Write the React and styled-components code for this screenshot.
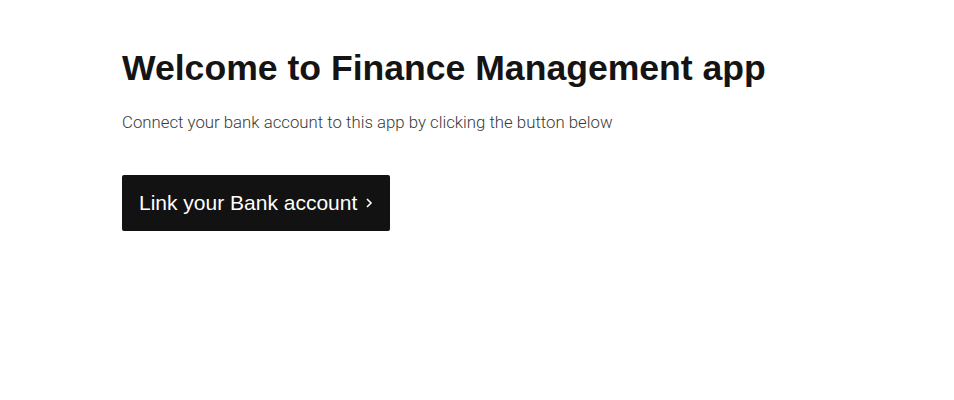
import React from 'react';
import styled, { createGlobalStyle } from 'styled-components';

const GlobalStyle = createGlobalStyle`
  body {
    margin: 0;
    background: #fff;
    font-family: "Liberation Sans", Arial, sans-serif;
  }
`;

const Page = styled.div`
  padding: 46px 122px;
  display: flex;
  flex-direction: column;
  align-items: flex-start;
`;

const Title = styled.h1`
  margin: 0;
  font-size: 35.6px;
  font-weight: 700;
  color: #141414;
  line-height: 44px;
`;

const Desc = styled.p`
  margin: 22px 0 0;
  font-family: Roboto, sans-serif;
  font-weight: 300;
  font-size: 16.8px;
  color: #3a3a3a;
  line-height: 20px;
`;

const Button = styled.button`
  margin-top: 43px;
  height: 56px;
  padding: 0 17px;
  display: flex;
  align-items: center;
  gap: 8px;
  background: #121212;
  color: #fff;
  border: none;
  border-radius: 2px;
  font-family: "Liberation Sans", Arial, sans-serif;
  font-size: 21px;
  cursor: pointer;
`;

const Chevron = () => (
  <svg width="8" height="12" viewBox="0 0 8 12" fill="none">
    <path d="M2 2l4 4-4 4" stroke="#fff" strokeWidth="1.6" />
  </svg>
);

export default function App() {
  return (
    <>
      <GlobalStyle />
      <Page>
        <Title>Welcome to Finance Management app</Title>
        <Desc>Connect your bank account to this app by clicking the button below</Desc>
        <Button>
          Link your Bank account
          <Chevron />
        </Button>
      </Page>
    </>
  );
}
